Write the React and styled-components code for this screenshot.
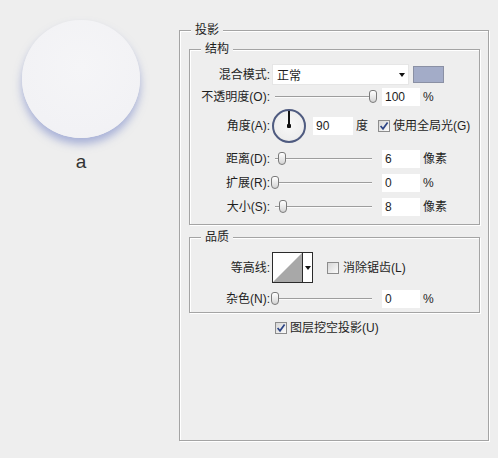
import React from 'react';
import styled, { createGlobalStyle } from 'styled-components';

const Global = createGlobalStyle`
  html, body { margin: 0; padding: 0; background: #eeeeee; }
  * { box-sizing: border-box; }
  body {
    font-family: "Liberation Sans", "Noto Sans CJK SC", sans-serif;
    font-size: 12px;
    color: #1e1e1e;
  }
`;

const Page = styled.div`
  display: flex;
  align-items: flex-start;
  width: 498px;
  height: 458px;
  overflow: hidden;
`;

const Preview = styled.div`
  width: 162px;
  flex-shrink: 0;
  display: flex;
  flex-direction: column;
  align-items: center;
  padding-top: 20px;
`;

const Ball = styled.div`
  width: 118px;
  height: 118px;
  border-radius: 50%;
  background: radial-gradient(circle at 50% 40%, #f5f5f7 0%, #f2f2f5 70%, #eeeff3 100%);
  box-shadow: 0 6px 8px rgba(112, 128, 196, 0.55);
`;

const Caption = styled.div`
  margin-top: 13px;
  font-family: "Liberation Sans", sans-serif;
  font-size: 19px;
  line-height: 22px;
  color: #333;
`;

const Group = styled.div`
  position: relative;
  display: flex;
  flex-direction: column;
  width: ${p => p.$w || '100%'};
  height: ${p => p.$h}px;
  margin-top: ${p => p.$mt || 0}px;
  margin-left: ${p => p.$ml || 0}px;
  padding: ${p => p.$pad || '0'};
  border: 1px solid #a4a4a4;
  box-shadow: inset 1px 1px 0 #fff, 1px 1px 0 #fff;
  flex-shrink: 0;
`;

const Legend = styled.div`
  position: absolute;
  top: -8px;
  left: 11px;
  padding: 0 4px;
  background: #eeeeee;
  font-size: 12px;
  line-height: 14px;
  white-space: nowrap;
`;

const Row = styled.div`
  display: flex;
  align-items: center;
  height: ${p => p.$h}px;
  margin-top: ${p => p.$mt || 0}px;
  padding-left: ${p => p.$pl || 0}px;
  flex-shrink: 0;
`;

const Label = styled.div`
  width: 80px;
  flex-shrink: 0;
  text-align: right;
  white-space: nowrap;
  line-height: 14px;
`;

const Text = styled.span`
  margin-left: ${p => p.$ml || 0}px;
  white-space: nowrap;
  line-height: 14px;
`;

const Select = styled.div`
  display: flex;
  align-items: center;
  justify-content: space-between;
  width: 137px;
  height: 21px;
  margin-left: 2px;
  padding: 0 3px 0 4px;
  background: #fff;
  border: 1px solid #e6e6e6;
  flex-shrink: 0;
`;

const Arrow = styled.span`
  width: 0;
  height: 0;
  border-left: 3px solid transparent;
  border-right: 3px solid transparent;
  border-top: 4px solid #111;
`;

const Swatch = styled.div`
  width: 31px;
  height: 17px;
  margin-left: 4px;
  background: #a3acc8;
  border: 1px solid #8a90a4;
  flex-shrink: 0;
`;

const SliderWrap = styled.div`
  position: relative;
  width: 107px;
  height: 14px;
  margin-left: 1px;
  flex-shrink: 0;
`;

const Track = styled.div`
  position: absolute;
  left: 4px;
  right: 6px;
  top: 6px;
  height: 2px;
  border-top: 1px solid #9d9d9d;
  border-bottom: 1px solid #fbfbfb;
`;

const Thumb = styled.div`
  position: absolute;
  top: 0;
  width: 8px;
  height: 13px;
  border: 1px solid #7a7a7a;
  border-radius: 3px 3px 4px 4px;
  background: linear-gradient(#ffffff, #d4d4d4);
`;

const NumInput = styled.input`
  width: ${p => p.$w || 38}px;
  height: 18px;
  margin: 0 0 0 ${p => p.$ml || 4}px;
  padding: 0 0 0 3px;
  border: none;
  outline: none;
  background: #fff;
  font-family: "Liberation Sans", sans-serif;
  font-size: 12px;
  color: #1e1e1e;
  flex-shrink: 0;
`;

const Dial = styled.div`
  position: relative;
  width: 34px;
  height: 34px;
  margin-left: 2px;
  border-radius: 50%;
  border: 2px solid #4f5b80;
  background: radial-gradient(circle at 50% 45%, #f8f8f8 0%, #eeeeee 65%, #dcdcdc 100%);
  flex-shrink: 0;
`;

const Needle = styled.div`
  position: absolute;
  left: 14px;
  top: 0;
  width: 2px;
  height: 15px;
  background: #111;
`;

const Hub = styled.div`
  position: absolute;
  left: 13px;
  top: 13px;
  width: 4px;
  height: 4px;
  border-radius: 1px;
  background: #111;
`;

const Box = styled.span`
  display: inline-flex;
  align-items: center;
  justify-content: center;
  width: 12px;
  height: 12px;
  margin-left: ${p => p.$ml || 0}px;
  border: 1px solid #8c8c8c;
  background: linear-gradient(135deg, #d6d6d6, #fbfbfb);
  flex-shrink: 0;
`;

const Contour = styled.div`
  display: flex;
  width: 41px;
  height: 31px;
  margin-left: 2px;
  border: 1px solid #2b2b2b;
  background: #fff;
  flex-shrink: 0;
`;

const CurveArea = styled.div`
  width: 30px;
  height: 29px;
  border-right: 1px solid #2b2b2b;
`;

const CurveDrop = styled.div`
  flex: 1;
  display: flex;
  align-items: center;
  justify-content: center;
`;

function CheckBox({ checked, ml }) {
  return (
    <Box $ml={ml}>
      {checked && (
        <svg width="10" height="10" viewBox="0 0 10 10">
          <path d="M1.6 5 L4 7.8 L8.6 1.6" fill="none" stroke="#2c4486" strokeWidth="1.7" />
        </svg>
      )}
    </Box>
  );
}

function Slider({ pos }) {
  return (
    <SliderWrap>
      <Track />
      <Thumb style={{ left: `${pos}px` }} />
    </SliderWrap>
  );
}

function SliderRow({ label, pos, value, unit, mt }) {
  return (
    <Row $h={19} $mt={mt}>
      <Label>{label}</Label>
      <Slider pos={pos} />
      <NumInput readOnly value={value} />
      <Text $ml={3}>{unit}</Text>
    </Row>
  );
}

export default function App() {
  return (
    <>
      <Global />
      <Page>
        <Preview>
          <Ball />
          <Caption>a</Caption>
        </Preview>
        <Group $w="310px" $h={411} $mt={30} $ml={17} $pad="18px 8px 0 9px">
          <Legend>投影</Legend>
          <Group $h={176}>
            <Legend>结构</Legend>
            <Row $h={21} $mt={14}>
              <Label>混合模式:</Label>
              <Select>
                <span>正常</span>
                <Arrow />
              </Select>
              <Swatch />
            </Row>
            <SliderRow label="不透明度(O):" pos={98} value="100" unit="%" mt={2} />
            <Row $h={34} $mt={3}>
              <Label>角度(A):</Label>
              <Dial>
                <Needle />
                <Hub />
              </Dial>
              <NumInput readOnly value="90" $w={40} $ml={7} />
              <Text $ml={3}>度</Text>
              <CheckBox checked ml={10} />
              <Text $ml={3}>使用全局光(G)</Text>
            </Row>
            <SliderRow label="距离(D):" pos={7} value="6" unit="像素" mt={6} />
            <SliderRow label="扩展(R):" pos={0} value="0" unit="%" mt={5} />
            <SliderRow label="大小(S):" pos={8} value="8" unit="像素" mt={5} />
          </Group>
          <Group $h={76} $mt={12}>
            <Legend>品质</Legend>
            <Row $h={31} $mt={14}>
              <Label>等高线:</Label>
              <Contour>
                <CurveArea>
                  <svg width="29" height="29" viewBox="0 0 29 29" style={{ display: 'block' }}>
                    <polygon points="0,29 29,0 29,29" fill="#a8a8a8" />
                  </svg>
                </CurveArea>
                <CurveDrop>
                  <Arrow />
                </CurveDrop>
              </Contour>
              <CheckBox ml={14} />
              <Text $ml={4}>消除锯齿(L)</Text>
            </Row>
            <SliderRow label="杂色(N):" pos={0} value="0" unit="%" mt={6} />
          </Group>
          <Row $h={17} $mt={6} $pl={86}>
            <CheckBox checked />
            <Text $ml={3}>图层挖空投影(U)</Text>
          </Row>
        </Group>
      </Page>
    </>
  );
}
